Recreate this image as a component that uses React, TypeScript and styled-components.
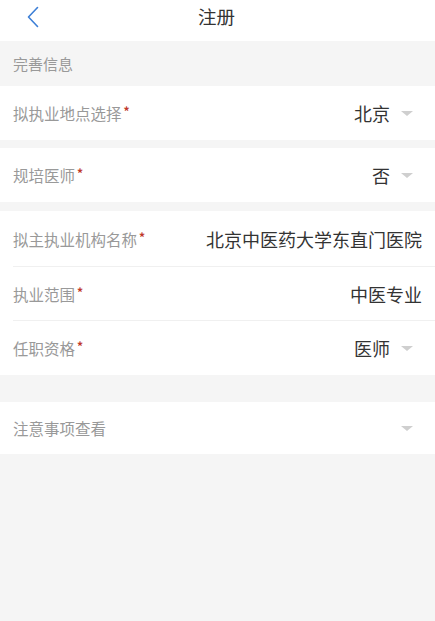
import React from "react";
import styled, { createGlobalStyle } from "styled-components";

const Global = createGlobalStyle`
  html, body { margin: 0; padding: 0; background: #f5f5f5; }
  body { font-family: "Noto Sans CJK SC", "Noto Sans", sans-serif; }
  * { box-sizing: border-box; }
`;

const Page = styled.div`
  width: 435px;
  min-height: 621px;
  background: #f5f5f5;
  display: flex;
  flex-direction: column;
`;

const NavBar = styled.div`
  height: 41px;
  background: #fff;
  display: flex;
  align-items: center;
  justify-content: center;
  position: relative;
`;

const BackButton = styled.button`
  position: absolute;
  left: 22px;
  top: 4px;
  width: 22px;
  height: 26px;
  border: 0;
  padding: 0;
  background: transparent;
  display: flex;
  align-items: center;
  justify-content: center;
`;

const Title = styled.div`
  font-size: 18.5px;
  color: #333;
  line-height: 1;
  margin-top: -8px;
  margin-left: -2px;
`;

const SectionHeader = styled.div`
  height: 45px;
  padding-left: 13px;
  display: flex;
  align-items: center;
  font-size: 15px;
  color: #999;
`;

const Card = styled.div<{ $gap: number }>`
  background: #fff;
  margin-top: ${(p) => p.$gap}px;
`;

const Row = styled.div<{ $h: number; $divider?: boolean; $arrow?: boolean }>`
  height: ${(p) => p.$h}px;
  margin-left: 13px;
  padding-right: ${(p) => (p.$arrow ? 22 : 13)}px;
  display: flex;
  align-items: center;
  justify-content: space-between;
  border-top: ${(p) => (p.$divider ? "1px solid #f0f0f0" : "none")};
`;

const Label = styled.div`
  font-size: 15.5px;
  line-height: 22px;
  color: #999;
  display: flex;
  align-items: flex-start;
  white-space: nowrap;
`;

const Star = styled.span`
  color: #c0392b;
  font-size: 12px;
  line-height: 1;
  margin-left: 2px;
  margin-top: 3px;
  font-weight: bold;
`;

const Right = styled.div`
  display: flex;
  align-items: center;
`;

const Value = styled.div`
  font-size: 18px;
  color: #333;
  white-space: nowrap;
`;

const Caret = styled.span`
  width: 0;
  height: 0;
  margin-left: 11px;
  border-left: 6px solid transparent;
  border-right: 6px solid transparent;
  border-top: 5px solid #cfcfcf;
`;

type Item = { label: string; value?: string; arrow?: boolean; star?: boolean; h: number };

const FormRow = ({ item, divider }: { item: Item; divider?: boolean }) => (
  <Row $h={item.h} $divider={divider} $arrow={item.arrow}>
    <Label>
      {item.label}
      {item.star !== false && <Star>*</Star>}
    </Label>
    <Right>
      {item.value && <Value>{item.value}</Value>}
      {item.arrow && <Caret />}
    </Right>
  </Row>
);

export default function App() {
  const group3: Item[] = [
    { label: "拟主执业机构名称", value: "北京中医药大学东直门医院", h: 55 },
    { label: "执业范围", value: "中医专业", h: 54 },
    { label: "任职资格", value: "医师", arrow: true, h: 55 },
  ];
  return (
    <Page>
      <Global />
      <NavBar>
        <BackButton aria-label="返回">
          <svg width="14" height="22" viewBox="0 0 14 22">
            <path d="M11.5 1.5 L2.5 11 L11.5 20.5" fill="none" stroke="#3d7fd6" strokeWidth="1.6" strokeLinecap="round" strokeLinejoin="round" />
          </svg>
        </BackButton>
        <Title>注册</Title>
      </NavBar>
      <SectionHeader>完善信息</SectionHeader>
      <Card $gap={0}>
        <FormRow item={{ label: "拟执业地点选择", value: "北京", arrow: true, h: 54 }} />
      </Card>
      <Card $gap={8}>
        <FormRow item={{ label: "规培医师", value: "否", arrow: true, h: 54 }} />
      </Card>
      <Card $gap={9}>
        {group3.map((it, i) => (
          <FormRow key={it.label} item={it} divider={i > 0} />
        ))}
      </Card>
      <Card $gap={27}>
        <FormRow item={{ label: "注意事项查看", arrow: true, star: false, h: 52 }} />
      </Card>
    </Page>
  );
}
